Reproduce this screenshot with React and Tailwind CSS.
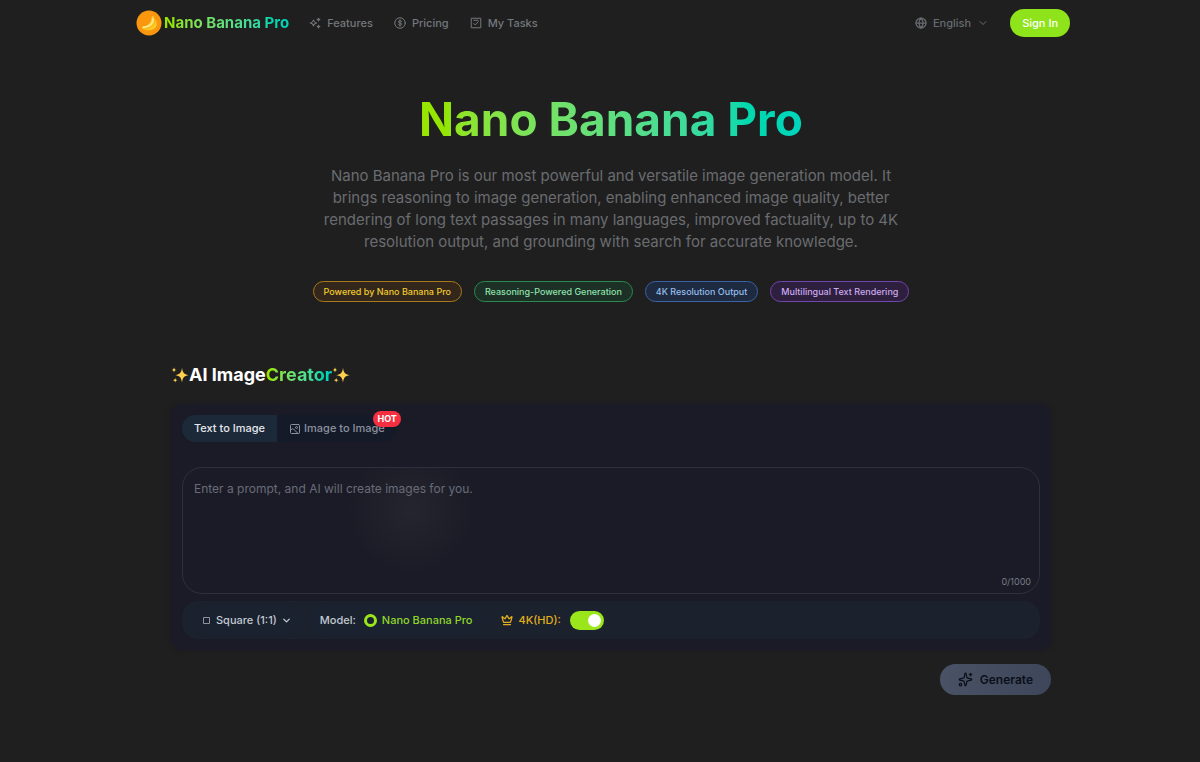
import { useState } from 'react';
import { ChevronDown, Crown, Globe, Image, Sparkles } from 'lucide-react';

const badges = [
  { label: 'Powered by Nano Banana Pro', style: 'border-[#a87a1c] bg-[#33271b] text-[#f2cb30]' },
  { label: 'Reasoning-Powered Generation', style: 'border-[#2a8a50] bg-[#1c3026] text-[#8fe0ac]' },
  { label: '4K Resolution Output', style: 'border-[#3c62a8] bg-[#1d2a3f] text-[#96bdec]' },
  { label: 'Multilingual Text Rendering', style: 'border-[#7345ae] bg-[#2d1f3d] text-[#ccaaee]' },
];

const BananaLogo = () => (
  <svg viewBox="0 0 26 26" className="size-[26px]" aria-hidden="true">
    <circle cx="13" cy="13" r="12.5" fill="#fb970f" />
    <path d="M15.800 6.500l1.700-.7.500 2.400c2.400 2.600 3.700 5.600 2.200 8.600-2 3.600-8.600 4.600-13.200 2.200-1-.6-1.200-2-.2-2.400 4.600-.2 8.200-3.200 9-10.100z" fill="#ffc928" />
    <path d="M17 8.500c.6 4.500-3 8-9.600 8.900" fill="none" stroke="#ffe993" strokeWidth="1.600" strokeLinecap="round" />
    <path d="M18.500 10.500c1 4.500-3.500 8-9.500 8" fill="none" stroke="#f2ad1b" strokeWidth=".8" strokeLinecap="round" />
  </svg>
);

const SparkleEmoji = () => (
  <svg viewBox="0 0 18 18" className="size-[18px]" fill="#fdd04d" aria-hidden="true">
    <path d="M11 1.800c.7 5 2 6.600 6.600 7.400-4.600.8-5.900 2.400-6.600 7.400-.7-5-2-6.600-6.600-7.400 4.600-.8 5.900-2.400 6.600-7.400z" />
    <path d="M3 1.200c.2 1.700.8 2.400 2.500 2.700-1.700.3-2.300 1-2.500 2.700C2.800 4.900 2.200 4.200.5 3.900 2.200 3.600 2.800 2.900 3 1.200z" />
    <path d="M4.200 11.800c.2 1.500.7 2.100 2.300 2.400-1.600.3-2.100.9-2.300 2.400-.2-1.500-.7-2.100-2.300-2.400 1.600-.3 2.100-.9 2.300-2.400z" />
  </svg>
);

const FeaturesIcon = () => (
  <svg viewBox="0 0 24 24" className="size-3" fill="none" stroke="currentColor" strokeWidth="2.200" strokeLinejoin="round" aria-hidden="true">
    <path d="M9 6c.8 4 2.200 5.300 6.500 6-4.300.7-5.700 2-6.500 6-.8-4-2.200-5.300-6.500-6C6.800 11.300 8.200 10 9 6z" />
    <path d="M19 2.500c.3 1.600 1 2.300 2.600 2.600-1.600.3-2.300 1-2.600 2.600-.3-1.600-1-2.300-2.600-2.600 1.600-.3 2.300-1 2.600-2.600zM19 16.500c.3 1.600 1 2.300 2.600 2.600-1.600.3-2.300 1-2.600 2.600-.3-1.600-1-2.300-2.600-2.600 1.600-.3 2.300-1 2.600-2.600z" />
  </svg>
);

const PricingIcon = () => (
  <svg viewBox="0 0 24 24" className="size-3" fill="none" stroke="currentColor" strokeWidth="2" strokeLinecap="round" aria-hidden="true">
    <circle cx="12" cy="12" r="10.500" />
    <path d="M15.500 9.500c-.5-1.300-1.800-2-3.500-2-2 0-3.500.8-3.500 2.200 0 3.200 7 1.400 7 4.600 0 1.400-1.500 2.200-3.500 2.200-1.700 0-3-.7-3.500-2M12 5.500v13" />
  </svg>
);

const TasksIcon = () => (
  <svg viewBox="0 0 24 24" className="size-3" fill="none" stroke="currentColor" strokeWidth="2" aria-hidden="true">
    <path d="M2.500 2.500h19v19h-19z" strokeLinejoin="round" />
    <path d="M7.500 13l3 3 6-6.500M8 6.500h8" strokeLinecap="round" />
  </svg>
);

const navLinks = [
  { label: 'Features', icon: FeaturesIcon },
  { label: 'Pricing', icon: PricingIcon },
  { label: 'My Tasks', icon: TasksIcon },
];

const App = () => {
  const [prompt, setPrompt] = useState('');
  const [hd, setHd] = useState(true);

  return (
    <div className="min-h-screen bg-[#1f1f1f] font-['Inter',sans-serif] text-white">
      <header className="mx-auto flex h-[46px] max-w-[940px] items-center justify-between pl-[6px]">
        <div className="flex items-center gap-5">
          <a href="#" className="flex items-center gap-[2px]">
            <BananaLogo />
            <span className="bg-gradient-to-r from-lime-400 to-teal-400 bg-clip-text text-[15px] font-bold text-transparent">
              Nano Banana Pro
            </span>
          </a>
          <nav className="flex items-center gap-[21px]">
            {navLinks.map(({ label, icon: Icon }) => (
              <a key={label} href="#" className="flex items-center gap-[6px] text-[11px] font-medium text-[#74777c]">
                <Icon />
                {label}
              </a>
            ))}
          </nav>
        </div>
        <div className="flex items-center gap-[21px]">
          <button className="flex items-center gap-[6px] text-[11px] font-medium text-[#686b70]">
            <Globe className="size-3" strokeWidth={2.5} />
            English
            <ChevronDown className="size-3" />
          </button>
          <button className="h-7 rounded-full bg-[#8ee31a] px-3 text-[11px] font-medium">Sign In</button>
        </div>
      </header>

      <main className="mx-auto max-w-[902px] pl-[22px]">
        {/* Hero */}
        <section className="flex flex-col items-center text-center">
          <h1 className="mt-[43px] bg-gradient-to-r from-lime-400 to-teal-400 bg-clip-text text-[46px] leading-[60px] font-bold text-transparent">
            Nano Banana Pro
          </h1>
          <p className="mt-4 max-w-[596px] text-[15px] leading-[22px] text-[#6a6c70]">
            Nano Banana Pro is our most powerful and versatile image generation model. It brings reasoning to image
            generation, enabling enhanced image quality, better rendering of long text passages in many languages,
            improved factuality, up to 4K resolution output, and grounding with search for accurate knowledge.
          </p>
          <div className="mt-7 flex flex-wrap justify-center gap-3">
            {badges.map((badge) => (
              <span
                key={badge.label}
                className={`flex h-[21px] items-center rounded-full border px-[10px] text-[9px] font-medium ${badge.style}`}
              >
                {badge.label}
              </span>
            ))}
          </div>
        </section>

        {/* Creator */}
        <section>
          <h2 className="mt-[59px] flex items-center text-[18px] leading-7 font-bold">
            <SparkleEmoji />
            AI Image
            <span className="bg-gradient-to-r from-lime-400 to-teal-400 bg-clip-text text-transparent">Creator</span>
            <SparkleEmoji />
          </h2>

          <div className="mt-[15px] rounded-xl bg-[#1b1b27] p-[11px] shadow-[0_0_4px_#1b1b27]">
            <div className="flex w-fit text-[11px] font-medium">
              <button className="h-[27px] rounded-l-full bg-[#1c2938] px-3 text-[#e4e7ec]">Text to Image</button>
              <button className="relative flex h-[27px] items-center gap-[3px] rounded-r-full bg-[#151a29] px-3 text-[#8b919e]">
                <Image className="size-3 -scale-x-100" />
                Image to Image
                <span className="absolute -top-1 -right-1 flex h-4 items-center rounded-full bg-[#f52f3f] px-1 text-[9px] font-bold text-white">
                  HOT
                </span>
              </button>
            </div>

            <div className="relative mt-[25px] h-[127px] overflow-hidden rounded-[20px] border border-[#2d313d] bg-[radial-gradient(circle_at_228px_42px,#25252f_0,#1b1b27_64px)]">
              <textarea
                aria-label="Prompt"
                value={prompt}
                maxLength={1000}
                onChange={(e) => setPrompt(e.target.value)}
                placeholder="Enter a prompt, and AI will create images for you."
                className="block size-full resize-none bg-transparent px-[11px] py-3 text-[12px] leading-[18px] outline-none placeholder:text-[#686c78]"
              />
              <span className="absolute right-2 bottom-[5px] text-[9px] text-[#777b86]">{prompt.length}/1000</span>
            </div>

            <div className="mt-[7px] flex h-[38px] items-center gap-[6px] rounded-2xl bg-[#1b212d] px-[10px] text-[11px] font-medium text-[#c3c8d1]">
              <label className="flex h-7 items-center rounded-full bg-[#1a2230] px-[11px]">
                <span className="sr-only">Aspect ratio</span>
                <svg viewBox="0 0 7 7" className="mr-[6px] size-[7px]" fill="none" stroke="#8d929c" aria-hidden="true">
                  <path d="M.5.5h6v6h-6z" />
                </svg>
                <select className="field-sizing-content appearance-none bg-transparent py-1 leading-5 outline-none">
                  <option>Square (1:1)</option>
                </select>
                <ChevronDown className="ml-1 size-[11px]" strokeWidth={3} />
              </label>
              <div className="flex h-7 items-center gap-2 rounded-full bg-[#1a2230] px-[11px]">
                <span>Model:</span>
                <label className="flex items-center gap-[5px] text-[#8fd629]">
                  <input
                    type="radio"
                    name="model"
                    defaultChecked
                    className="size-[13px] appearance-none rounded-full border-[3px] border-[#9ae61a] bg-[#1b212d]"
                  />
                  Nano Banana Pro
                </label>
              </div>
              <label className="flex h-7 items-center gap-[6px] px-[11px] text-[#e0b01c]">
                <Crown className="size-3" strokeWidth={2.5} />
                4K(HD):
                <input
                  type="checkbox"
                  role="switch"
                  checked={hd}
                  onChange={(e) => setHd(e.target.checked)}
                  className="ml-[3px] flex h-[19px] w-[34px] appearance-none items-center rounded-full bg-[#4b5563] px-[3px] before:size-[13px] before:rounded-full before:bg-white checked:justify-end checked:bg-[#9ae61a]"
                />
              </label>
            </div>
          </div>

          <div className="mt-[14px] flex justify-end">
            <button className="flex h-[31px] items-center gap-[7px] rounded-full bg-gradient-to-r from-[#4a5365] to-[#3d465a] px-[18px] text-[12px] font-semibold text-[#0b0f1a]">
              <Sparkles className="size-[15px]" />
              Generate
            </button>
          </div>
        </section>
      </main>
    </div>
  );
};

export default App;
